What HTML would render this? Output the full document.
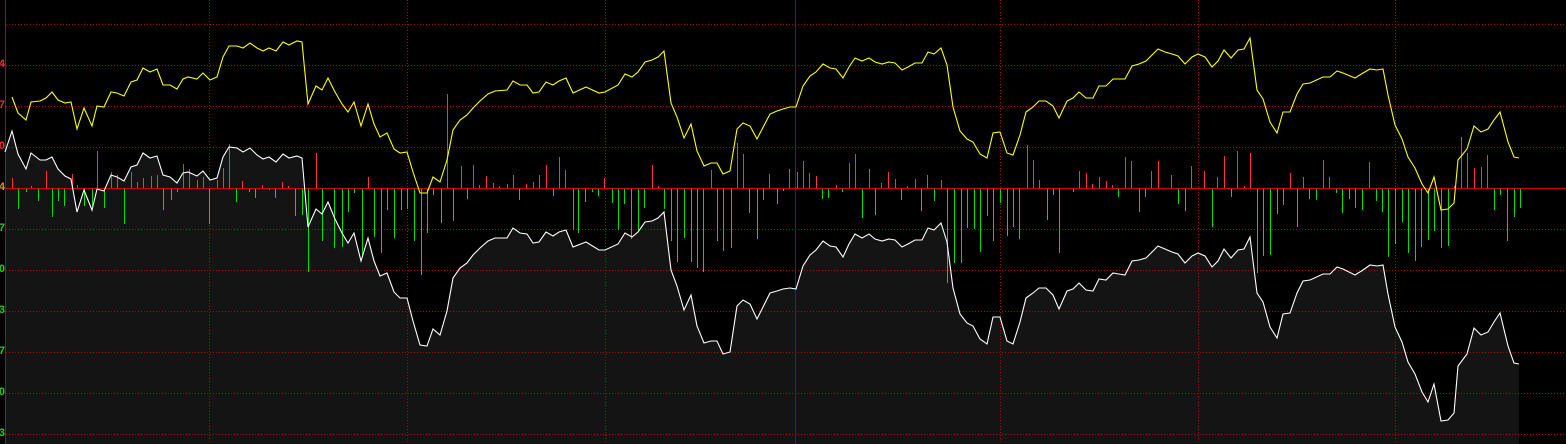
<!DOCTYPE html>
<html><head><meta charset="utf-8"><style>
html,body{margin:0;padding:0;background:#000;width:1566px;height:444px;overflow:hidden}
#lab{position:absolute;left:0;top:0;width:5px;height:444px;overflow:hidden}
#lab span{position:absolute;right:0;font:bold 11px "Liberation Sans",sans-serif;line-height:11px}
svg{position:absolute;left:0;top:0}
</style></head><body>
<svg id="s" width="1566" height="444" xmlns="http://www.w3.org/2000/svg"></svg>
<div id="lab">
<span style="top:59px;color:#f03030">14</span>
<span style="top:100px;color:#f03030">17</span>
<span style="top:141px;color:#f03030">10</span>
<span style="top:182px;color:#e09040">14</span>
<span style="top:223px;color:#20d020">17</span>
<span style="top:264px;color:#20d020">10</span>
<span style="top:305px;color:#20d020">13</span>
<span style="top:346px;color:#20d020">17</span>
<span style="top:387px;color:#20d020">10</span>
<span style="top:428px;color:#20d020">13</span>
</div>
<script>
var Y=[[12,97],[18,113],[26,120],[31,102],[40,101],[46,98],[52,92],[58,100],[65,103],[71,102],[77,129],[84,108],[92,126],[97,106],[104,107],[111,92],[117,93],[124,96],[131,82],[137,80],[143,68],[150,72],[157,69],[163,85],[170,85],[177,89],[183,79],[188,77],[197,79],[203,73],[210,80],[217,77],[223,57],[229,46],[237,46],[243,48],[250,43],[257,48],[263,51],[269,48],[276,51],[283,42],[289,45],[297,41],[302,42],[304,63],[308,104],[316,86],[322,90],[328,78],[335,92],[342,104],[348,112],[354,102],[361,126],[368,104],[374,124],[380,137],[387,133],[394,149],[400,153],[407,152],[413,172],[420,193],[427,193],[433,177],[440,182],[447,160],[453,130],[460,120],[467,115],[473,108],[480,101],[488,94],[495,91],[507,90],[513,81],[520,85],[527,85],[533,93],[539,92],[546,82],[553,85],[559,81],[566,78],[573,93],[586,87],[599,93],[605,92],[618,85],[625,74],[632,77],[638,72],[645,62],[652,60],[658,57],[664,51],[671,103],[677,117],[684,138],[691,124],[697,151],[704,166],[711,163],[717,163],[723,174],[730,171],[737,129],[743,123],[750,126],[757,139],[770,114],[777,111],[783,109],[790,107],[796,107],[803,86],[810,76],[816,72],[823,64],[830,68],[836,69],[843,78],[849,67],[855,58],[862,61],[869,58],[875,62],[882,64],[889,62],[895,63],[902,70],[908,67],[915,63],[922,63],[928,52],[934,54],[941,48],[947,65],[953,107],[960,131],[967,139],[973,142],[980,154],[987,158],[993,133],[1000,132],[1007,153],[1013,155],[1020,135],[1026,112],[1033,107],[1039,101],[1046,101],[1053,106],[1059,118],[1067,101],[1073,98],[1079,92],[1086,98],[1093,98],[1099,86],[1106,86],[1113,79],[1119,79],[1125,79],[1132,66],[1139,64],[1146,61],[1152,55],[1158,49],[1165,52],[1172,54],[1178,56],[1185,64],[1192,57],[1198,54],[1205,57],[1212,67],[1218,61],[1224,50],[1231,58],[1238,50],[1244,49],[1250,38],[1257,90],[1263,99],[1270,122],[1277,133],[1283,112],[1290,112],[1297,94],[1303,84],[1310,83],[1323,77],[1330,77],[1337,71],[1343,73],[1355,78],[1363,73],[1370,69],[1377,70],[1383,69],[1388,95],[1395,125],[1402,139],[1408,157],[1415,168],[1422,184],[1428,193],[1434,177],[1441,210],[1448,209],[1454,203],[1458,160],[1467,149],[1474,126],[1481,132],[1488,129],[1494,120],[1500,112],[1508,142],[1514,157],[1519,158]];
var OF=[[0,20],[12,24],[40,49],[77,70],[150,79],[229,96],[304,112],[420,133],[540,141],[664,156],[796,171],[990,170],[1158,192],[1250,195],[1300,189],[1519,190]];
function off(x){for(var i=1;i<OF.length;i++){if(x<=OF[i][0]){var a=OF[i-1],b=OF[i];return a[1]+(b[1]-a[1])*(x-a[0])/(b[0]-a[0]);}}return 190;}
var R=[[12,178],[31,186],[46,171],[72,174],[77,185],[97,151],[111,172],[117,175],[131,172],[137,182],[143,178],[151,176],[157,175],[183,164],[189,169],[197,180],[203,177],[217,180],[223,168],[229,144],[242,181],[262,185],[282,182],[288,186],[316,153],[368,177],[447,94],[461,166],[473,165],[479,185],[486,176],[493,183],[499,186],[507,184],[513,175],[526,184],[533,182],[539,175],[546,165],[559,157],[565,170],[604,178],[652,165],[658,186],[711,170],[737,143],[743,154],[769,174],[789,169],[797,172],[803,161],[809,173],[816,176],[836,185],[849,163],[855,154],[869,169],[881,183],[888,172],[895,179],[907,186],[915,179],[927,175],[941,180],[1027,145],[1033,160],[1039,180],[1079,171],[1086,173],[1092,184],[1099,177],[1106,181],[1112,185],[1125,157],[1131,161],[1151,171],[1158,161],[1171,175],[1191,166],[1204,171],[1217,177],[1224,156],[1237,151],[1244,186],[1250,153],[1290,173],[1303,177],[1323,160],[1329,177],[1369,162],[1454,186],[1461,137],[1467,153],[1474,168],[1481,167],[1487,155]];
var G=[[18,209],[26,192],[38,201],[52,217],[58,201],[64,206],[84,206],[92,206],[104,208],[124,224],[163,210],[171,200],[177,192],[209,224],[236,202],[249,192],[255,198],[269,190],[275,198],[295,216],[302,215],[308,272],[322,241],[334,248],[342,247],[348,212],[354,193],[362,257],[374,237],[381,253],[387,210],[394,238],[401,210],[407,209],[414,241],[421,275],[427,233],[433,195],[441,223],[453,221],[467,199],[519,200],[553,196],[573,230],[578,233],[585,202],[592,192],[598,196],[612,203],[618,230],[624,204],[631,239],[638,230],[644,208],[664,209],[671,241],[677,262],[684,238],[691,262],[697,268],[703,272],[717,241],[723,251],[731,248],[749,213],[757,239],[763,200],[777,204],[783,191],[822,199],[828,198],[842,192],[862,218],[875,215],[901,200],[921,211],[934,201],[947,283],[954,263],[961,263],[967,228],[974,229],[980,252],[987,216],[993,241],[1000,203],[1007,236],[1013,227],[1019,239],[1047,220],[1053,195],[1059,253],[1073,192],[1118,197],[1139,212],[1145,197],[1178,204],[1185,211],[1212,227],[1231,197],[1257,273],[1263,256],[1270,255],[1277,214],[1283,205],[1297,227],[1309,199],[1316,200],[1336,193],[1342,213],[1349,199],[1355,208],[1362,210],[1376,201],[1382,212],[1388,257],[1395,244],[1402,222],[1408,253],[1415,261],[1421,247],[1428,240],[1434,231],[1441,248],[1448,246],[1494,210],[1500,195],[1507,241],[1514,217],[1520,208]];
var h='<defs><linearGradient id="g" x1="0" y1="0" x2="0" y2="1" gradientUnits="userSpaceOnUse" x2="0" y1="130" y2="444"><stop offset="0" stop-color="#232323"/><stop offset="1" stop-color="#141414"/></linearGradient></defs>';
var wp=[[5,152]].concat(Y.map(function(p){return [p[0],Math.round(1.1*p[1]+off(p[0]))];}));
wp[1][1]=131;
var d='M5,444 '+wp.map(function(p){return 'L'+p[0]+','+p[1];}).join(' ')+' L1519,444 Z';
h+='<path d="'+d+'" fill="url(#g)"/>';
var hs=[24,65,106,147,229,270,311,352,393,434];
hs.forEach(function(y){h+='<line x1="6" x2="1566" y1="'+(y+.5)+'" y2="'+(y+.5)+'" stroke="#b00000" stroke-dasharray="1 2"/>';});
[209,407,605,1000,1198,1395].forEach(function(x){h+='<line y1="0" y2="444" x1="'+(x+.5)+'" x2="'+(x+.5)+'" stroke="#b00000" stroke-dasharray="1 2"/>';});
h+='<line y1="0" y2="444" x1="795.5" x2="795.5" stroke="#8a0a0a"/>';
h+='<line y1="0" y2="444" x1="5.5" x2="5.5" stroke="#c00000"/>';
R.forEach(function(b){h+='<line x1="'+(b[0]+.5)+'" x2="'+(b[0]+.5)+'" y1="188" y2="'+b[1]+'" stroke="#ff3535"/>';});
G.forEach(function(b){h+='<line x1="'+(b[0]+.5)+'" x2="'+(b[0]+.5)+'" y1="188" y2="'+b[1]+'" stroke="#00e000"/>';});
h+='<line x1="6" x2="1566" y1="188.5" y2="188.5" stroke="#d00000"/>';
h+='<polyline fill="none" stroke="#fff" stroke-width="1.1" points="'+wp.map(function(p){return p.join(',');}).join(' ')+'"/>';
h+='<polyline fill="none" stroke="#ffff00" stroke-width="1.1" points="'+Y.map(function(p){return p.join(',');}).join(' ')+'"/>';
document.getElementById('s').innerHTML=h;
</script>
</body></html>
